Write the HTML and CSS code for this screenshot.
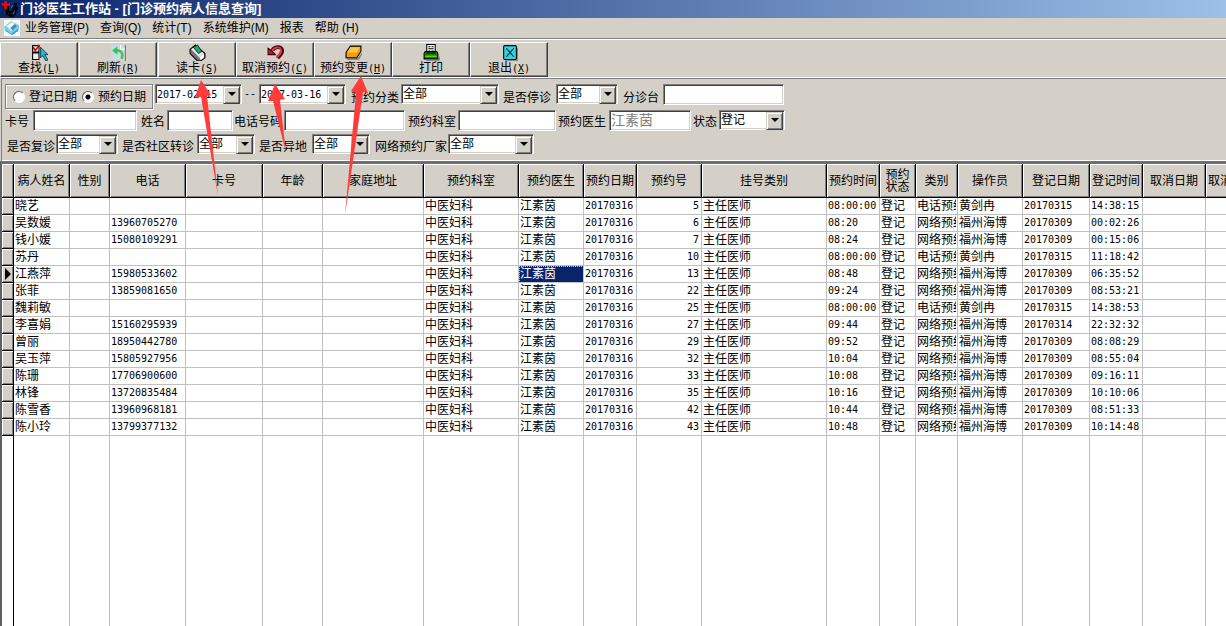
FILE: index.html
```html
<!DOCTYPE html>
<html lang="zh-CN">
<head>
<meta charset="utf-8">
<title>门诊医生工作站</title>
<link rel="stylesheet" href="styles.css">
</head>
<body>
<div class="app">
  <header class="titlebar">
    <svg class="logo" viewBox="0 0 18 18"><path d="M8 6v4c0 3 4 3 5 0l3-5M10 11v3c1 3 5 2 5-1l2-6M14 4h3M7 8v6l4 2" fill="none" stroke="#000" stroke-width="2"/><path d="M11 8l2-3M13 14l2-3" stroke="#4868c0"/><path d="M5.500 1v8M2 4.500h8" stroke="#f00" stroke-width="2.500"/></svg>
    <h1 class="title">门诊医生工作站 - [门诊预约病人信息查询]</h1>
  </header>
  <nav class="menubar">
    <svg class="menu-icon" viewBox="0 0 16 16"><path d="M0 0h16v16H0z" fill="#f4fafc"/><path d="M0 7l7-6 8 4v5l-7 5-7-4z" fill="#7ccbe6"/><path d="M2 6l6-4 5 3-6 6z" fill="#c8eef8"/><path d="M2 10l5 4 7-5v2l-6 4-6-4z" fill="#2b9bd0"/><path d="M6 8l5-4 2 2-4 4z" fill="#3d8fb8"/><path d="M4 6l4-3 2 1-4 4z" fill="#fff"/></svg>
    <button class="menu">业务管理(P)</button>
    <button class="menu">查询(Q)</button>
    <button class="menu">统计(T)</button>
    <button class="menu">系统维护(M)</button>
    <button class="menu">报表</button>
    <button class="menu">帮助 (H)</button>
  </nav>
  <div class="toolbar">
    <button class="tool"><svg class="icon" viewBox="0 0 16 16"><path d="M1.500 1.500h6v6h-6zM1.500 8.500h6v6h-6z" fill="#eee" stroke="#000"/><path d="M2 3l2 3 4-5" fill="none" stroke="#d00000" stroke-width="1.500"/><path d="M9 3v10l2-2 3 5 2-1-3-5h3z" fill="#18b8e8" stroke="#000" stroke-width=".6"/></svg><span>查找<span class="key">(<u>L</u>)</span></span></button>
    <button class="tool"><svg class="icon" viewBox="0 0 16 16"><path d="M1 1h13v14H1z" fill="#c4dce2"/><path d="M14.500 1v15" stroke="#777"/><path d="M11 14c2-6-1-8-5-8" fill="none" stroke="#4fbf5b" stroke-width="2.500"/><path d="M2 6l5-4v8z" fill="#34c45c"/><path d="M10 1v4h4" fill="none" stroke="#fff"/></svg><span>刷新<span class="key">(<u>R</u>)</span></span></button>
    <button class="tool"><svg class="icon" viewBox="0 0 16 16"><path d="M1 5l5-4 9 8v4l-4 3H8L1 9z" fill="#777" stroke="#000"/><path d="M2 5l4-3 8 7-4 4z" fill="#e8e8e8"/><path d="M10 13l4-4v4l-3 2z" fill="#fff"/><path d="M4 3l4-2 4 6-3 2z" fill="#1cab72" stroke="#000" stroke-width=".7"/></svg><span>读卡<span class="key">(<u>S</u>)</span></span></button>
    <button class="tool"><svg class="icon" viewBox="0 0 16 16"><path d="M5 6c2-4 8-4 9-1s-1 5-4 8" fill="none" stroke="#400010" stroke-width="3.500"/><path d="M1 4v6h7L6 8 4 6z" fill="#c81030" stroke="#400010"/><path d="M5 6c2-3 7-4 8-1s-1 5-4 8" fill="none" stroke="#e03850" stroke-width="1.800"/></svg><span>取消预约<span class="key">(<u>C</u>)</span></span></button>
    <button class="tool"><svg class="icon" viewBox="0 0 16 16"><path d="M2 13h10l4-5v2l-3 5H2z" fill="#888"/><path d="M5 2h10v5l-4 6H1V8z" fill="#f0a000" stroke="#000"/><path d="M5 3h9l-3 5H2z" fill="#ffc44c"/></svg><span>预约变更<span class="key">(<u>H</u>)</span></span></button>
    <button class="tool"><svg class="icon" viewBox="0 0 16 16"><path d="M3 15h11l2-4v4l-1 1H3z" fill="#888"/><path d="M3.500 8V.500h8V8z" fill="#fff" stroke="#000"/><path d="M5 2.500h2m1 0h2M5 4.500h5M5 6.500h2m1 0h2" stroke="#000"/><path d="M1 9l1-2h11l1 2v5H1z" fill="#168000" stroke="#000"/><path d="M2 11.500h11" stroke="#78f000"/><path d="M3 8.500h9" stroke="#000"/></svg><span>打印</span></button>
    <button class="tool"><svg class="icon" viewBox="0 0 16 16"><path d="M4 15h10l1-1V3l1 1v12H4z" fill="#888"/><rect x="2.500" y="1.500" width="12" height="13" rx="1" fill="#30d4d8" stroke="#000"/><path d="M5 4l7 8M12 4l-7 8" stroke="#024"/></svg><span>退出<span class="key">(<u>X</u>)</span></span></button>
  </div>
  <form class="filters">
    <div class="row row-top">
      <div class="radios">
        <label class="radio"><input type="radio" name="kind">登记日期</label>
        <label class="radio"><input type="radio" name="kind" checked>预约日期</label>
      </div>
      <span class="combo w-date g2"><select class="mono" aria-label="开始日期"><option>2017-02-15</option></select></span>
      <span class="mono dash g2">--</span>
      <span class="combo w-date g3"><select class="mono" aria-label="结束日期"><option>2017-03-16</option></select></span>
      <label class="g5" for="f1">预约分类</label><span class="combo w-98 g2"><select id="f1"><option>全部</option></select></span>
      <label class="g4" for="f2">是否停诊</label><span class="combo w-62 g5"><select id="f2"><option>全部</option></select></span>
      <label class="g5" for="f3">分诊台</label><input class="text w-121 g4" id="f3" type="text">
    </div>
    <div class="row row-mid">
      <label for="f4">卡号</label><input class="text w-104 g4" id="f4" type="text">
      <label class="g4" for="f5">姓名</label><input class="text w-66 g2" id="f5" type="text">
      <label class="g1" for="f6">电话号码</label><input class="text w-121 g2" id="f6" type="text">
      <label class="g3" for="f7">预约科室</label><input class="text w-98 g2" id="f7" type="text">
      <label class="g2" for="f8">预约医生</label><input class="text doctor w-82 g3" id="f8" type="text" value="江素茵" disabled>
      <label class="g2" for="f9">状态</label><span class="combo w-66 g2"><select id="f9"><option>登记</option></select></span>
    </div>
    <div class="row row-low">
      <label for="f10">是否复诊</label><span class="combo w-62 g1"><select id="f10"><option>全部</option></select></span>
      <label class="g4" for="f11">是否社区转诊</label><span class="combo w-58 g3"><select id="f11"><option>全部</option></select></span>
      <label class="g4" for="f12">是否异地</label><span class="combo w-58 g5"><select id="f12"><option>全部</option></select></span>
      <label class="g5" for="f13">网络预约厂家</label><span class="combo w-86 g1"><select id="f13"><option>全部</option></select></span>
    </div>
  </form>
  <main class="grid">
    <table>
      <colgroup><col class="c-mark"><col class="c56"><col class="c40"><col class="c76"><col class="c77"><col class="c60"><col class="c101"><col class="c95"><col class="c65"><col class="c53"><col class="c65"><col class="c125"><col class="c53"><col class="c36"><col class="c42"><col class="c65"><col class="c67"><col class="c53"><col class="c63"><col class="c53"></colgroup>
      <thead><tr><th></th><th>病人姓名</th><th>性别</th><th>电话</th><th>卡号</th><th>年龄</th><th>家庭地址</th><th>预约科室</th><th>预约医生</th><th>预约日期</th><th>预约号</th><th>挂号类别</th><th>预约时间</th><th>预约<br>状态</th><th>类别</th><th>操作员</th><th>登记日期</th><th>登记时间</th><th>取消日期</th><th>取消时间</th></tr></thead>
      <tbody>
        <tr><th></th><td>晓艺</td><td></td><td class="mono"></td><td></td><td></td><td></td><td>中医妇科</td><td>江素茵</td><td class="mono">20170316</td><td class="mono num">5</td><td>主任医师</td><td class="mono">08:00:00</td><td>登记</td><td><div class="clip">电话预约</div></td><td>黄剑冉</td><td class="mono">20170315</td><td class="mono">14:38:15</td><td></td><td></td></tr>
        <tr><th></th><td>吴数媛</td><td></td><td class="mono">13960705270</td><td></td><td></td><td></td><td>中医妇科</td><td>江素茵</td><td class="mono">20170316</td><td class="mono num">6</td><td>主任医师</td><td class="mono">08:20</td><td>登记</td><td><div class="clip">网络预约</div></td><td>福州海博</td><td class="mono">20170309</td><td class="mono">00:02:26</td><td></td><td></td></tr>
        <tr><th></th><td>钱小媛</td><td></td><td class="mono">15080109291</td><td></td><td></td><td></td><td>中医妇科</td><td>江素茵</td><td class="mono">20170316</td><td class="mono num">7</td><td>主任医师</td><td class="mono">08:24</td><td>登记</td><td><div class="clip">网络预约</div></td><td>福州海博</td><td class="mono">20170309</td><td class="mono">00:15:06</td><td></td><td></td></tr>
        <tr><th></th><td>苏丹</td><td></td><td class="mono"></td><td></td><td></td><td></td><td>中医妇科</td><td>江素茵</td><td class="mono">20170316</td><td class="mono num">10</td><td>主任医师</td><td class="mono">08:00:00</td><td>登记</td><td><div class="clip">电话预约</div></td><td>黄剑冉</td><td class="mono">20170315</td><td class="mono">11:18:42</td><td></td><td></td></tr>
        <tr><th><svg class="marker" viewBox="0 0 7 12"><path d="M1 0l6 6-6 6z"/></svg></th><td>江燕萍</td><td></td><td class="mono">15980533602</td><td></td><td></td><td></td><td>中医妇科</td><td class="selected">江素茵</td><td class="mono">20170316</td><td class="mono num">13</td><td>主任医师</td><td class="mono">08:48</td><td>登记</td><td><div class="clip">网络预约</div></td><td>福州海博</td><td class="mono">20170309</td><td class="mono">06:35:52</td><td></td><td></td></tr>
        <tr><th></th><td>张菲</td><td></td><td class="mono">13859081650</td><td></td><td></td><td></td><td>中医妇科</td><td>江素茵</td><td class="mono">20170316</td><td class="mono num">22</td><td>主任医师</td><td class="mono">09:24</td><td>登记</td><td><div class="clip">网络预约</div></td><td>福州海博</td><td class="mono">20170309</td><td class="mono">08:53:21</td><td></td><td></td></tr>
        <tr><th></th><td>魏莉敏</td><td></td><td class="mono"></td><td></td><td></td><td></td><td>中医妇科</td><td>江素茵</td><td class="mono">20170316</td><td class="mono num">25</td><td>主任医师</td><td class="mono">08:00:00</td><td>登记</td><td><div class="clip">电话预约</div></td><td>黄剑冉</td><td class="mono">20170315</td><td class="mono">14:38:53</td><td></td><td></td></tr>
        <tr><th></th><td>李喜娟</td><td></td><td class="mono">15160295939</td><td></td><td></td><td></td><td>中医妇科</td><td>江素茵</td><td class="mono">20170316</td><td class="mono num">27</td><td>主任医师</td><td class="mono">09:44</td><td>登记</td><td><div class="clip">网络预约</div></td><td>福州海博</td><td class="mono">20170314</td><td class="mono">22:32:32</td><td></td><td></td></tr>
        <tr><th></th><td>曾丽</td><td></td><td class="mono">18950442780</td><td></td><td></td><td></td><td>中医妇科</td><td>江素茵</td><td class="mono">20170316</td><td class="mono num">29</td><td>主任医师</td><td class="mono">09:52</td><td>登记</td><td><div class="clip">网络预约</div></td><td>福州海博</td><td class="mono">20170309</td><td class="mono">08:08:29</td><td></td><td></td></tr>
        <tr><th></th><td>吴玉萍</td><td></td><td class="mono">15805927956</td><td></td><td></td><td></td><td>中医妇科</td><td>江素茵</td><td class="mono">20170316</td><td class="mono num">32</td><td>主任医师</td><td class="mono">10:04</td><td>登记</td><td><div class="clip">网络预约</div></td><td>福州海博</td><td class="mono">20170309</td><td class="mono">08:55:04</td><td></td><td></td></tr>
        <tr><th></th><td>陈珊</td><td></td><td class="mono">17706900600</td><td></td><td></td><td></td><td>中医妇科</td><td>江素茵</td><td class="mono">20170316</td><td class="mono num">33</td><td>主任医师</td><td class="mono">10:08</td><td>登记</td><td><div class="clip">网络预约</div></td><td>福州海博</td><td class="mono">20170309</td><td class="mono">09:16:11</td><td></td><td></td></tr>
        <tr><th></th><td>林锋</td><td></td><td class="mono">13720835484</td><td></td><td></td><td></td><td>中医妇科</td><td>江素茵</td><td class="mono">20170316</td><td class="mono num">35</td><td>主任医师</td><td class="mono">10:16</td><td>登记</td><td><div class="clip">网络预约</div></td><td>福州海博</td><td class="mono">20170309</td><td class="mono">10:10:06</td><td></td><td></td></tr>
        <tr><th></th><td>陈雪香</td><td></td><td class="mono">13960968181</td><td></td><td></td><td></td><td>中医妇科</td><td>江素茵</td><td class="mono">20170316</td><td class="mono num">42</td><td>主任医师</td><td class="mono">10:44</td><td>登记</td><td><div class="clip">网络预约</div></td><td>福州海博</td><td class="mono">20170309</td><td class="mono">08:51:33</td><td></td><td></td></tr>
        <tr><th></th><td>陈小玲</td><td></td><td class="mono">13799377132</td><td></td><td></td><td></td><td>中医妇科</td><td>江素茵</td><td class="mono">20170316</td><td class="mono num">43</td><td>主任医师</td><td class="mono">10:48</td><td>登记</td><td><div class="clip">网络预约</div></td><td>福州海博</td><td class="mono">20170309</td><td class="mono">10:14:48</td><td></td><td></td></tr>
        <tr class="filler"><td></td><td></td><td></td><td></td><td></td><td></td><td></td><td></td><td></td><td></td><td></td><td></td><td></td><td></td><td></td><td></td><td></td><td></td><td></td><td></td></tr>
      </tbody>
    </table>
  </main>
  <svg class="arrows" width="400" height="220" viewBox="0 0 400 220"><path d="M201 80l10 15-4 1 11 100-17-99-6 1zM275 84l10 15-5 1 6 53-13-52-5 0zM361 76l7 17-5-1-18 123 11-122-5-2z"/></svg>
</div>
</body>
</html>
```
FILE: styles.css
```css
* { box-sizing: border-box; }
body {
  margin: 0;
  background: #d4d0c8;
  color: #000;
  font: 12px/14px "Liberation Sans", "Noto Sans CJK SC", sans-serif;
}
button, input, select { font: inherit; color: inherit; }
.app { position: relative; display: flex; flex-direction: column; height: 100vh; overflow: hidden; }
.mono, .key { font-family: "DejaVu Sans Mono", "Noto Sans CJK SC", monospace; font-size: 10px; }

.titlebar { display: flex; flex: none; align-items: center; gap: 2px; height: 18px; background: linear-gradient(90deg, #0a246a, #9cc0e8); }
.logo { width: 18px; height: 18px; }
.title { margin: 0; color: #fff; font-size: 13px; line-height: 18px; font-weight: bold; white-space: nowrap; }

.menubar { display: flex; flex: none; align-items: center; gap: 11px; height: 21px; padding: 0 4px 1px; border-bottom: 1px solid #808080; }
.menu-icon { width: 16px; height: 16px; margin-right: -6px; }
.menu { padding: 0; border: 0; background: none; line-height: 18px; white-space: nowrap; }

.toolbar { display: flex; flex: none; height: 39px; padding-top: 2px; border-top: 1px solid #fff; border-bottom: 1px solid #fff; }
.tool {
  display: flex;
  flex-direction: column;
  align-items: center;
  width: 78px;
  height: 35px;
  margin-right: 1px;
  padding: 1px 0 0;
  border: 1px solid;
  border-color: #fff #404040 #404040 #fff;
  background: #d4d0c8;
  box-shadow: inset -1px -1px #808080;
  white-space: nowrap;
}
.tool:nth-child(n+3) { margin-right: 0; }
.icon { flex: none; width: 17px; height: 17px; }

.filters { flex: none; height: 83px; margin: 0 0 0 1px; padding: 5px 0 0 3px; border: 1px solid #808080; border-width: 1px 0 0 1px; box-shadow: inset 0 -1px #fff; }
.row { display: flex; align-items: flex-start; white-space: nowrap; }
.row label { flex: none; }
.row-top { height: 26px; line-height: 28px; }
.row-mid { height: 24px; line-height: 25px; }
.row-low { height: 24px; padding-left: 2px; line-height: 26px; }
.radios { display: flex; align-items: center; gap: 5px; width: 148px; height: 25px; padding-left: 7px; border: 1px solid #808080; box-shadow: inset 1px 1px #fff, 1px 1px #fff; }
.radio { display: flex; align-items: center; gap: 4px; }
.radio input {
  appearance: none;
  width: 12px;
  height: 12px;
  margin: 0;
  border: 1px solid;
  border-color: #606060 #fff #fff #606060;
  border-radius: 50%;
  background: #fff;
}
.radio input:checked { background: radial-gradient(circle, #000 2px, #fff 3px); }
.dash { width: 12px; line-height: 20px; }
.g1 { margin-left: 1px; }
.g2 { margin-left: 2px; }
.g3 { margin-left: 3px; }
.g4 { margin-left: 4px; }
.g5 { margin-left: 5px; }
.text, .combo select {
  border: 1px solid;
  border-color: #808080 #fff #fff #808080;
  border-radius: 0;
  background: #fff;
  box-shadow: inset 1px 1px #404040, inset -1px -1px #d4d0c8;
}
.text { flex: none; height: 21px; padding: 0 3px; }
.text:disabled { color: #808080; }
.doctor { padding: 0 1px; font-size: 14px; }
.combo { position: relative; display: block; flex: none; height: 20px; }
.combo select { display: block; appearance: none; width: 100%; height: 20px; padding: 0 0 0 1px; line-height: 17px; }
.combo::before {
  content: "";
  position: absolute;
  top: 2px;
  right: 2px;
  width: 15px;
  height: 16px;
  border: 1px solid;
  border-color: #d4d0c8 #404040 #404040 #d4d0c8;
  background: #d4d0c8;
  box-shadow: inset 1px 1px #fff, inset -1px -1px #808080;
  pointer-events: none;
}
.combo::after {
  content: "";
  position: absolute;
  top: 8px;
  right: 6px;
  border: 4px solid transparent;
  border-top-color: #000;
  border-bottom: 0;
  pointer-events: none;
}
.w-date { width: 87px; }
.w-58 { width: 58px; }
.w-62 { width: 62px; }
.w-66 { width: 66px; }
.w-82 { width: 82px; }
.w-86 { width: 86px; }
.w-98 { width: 98px; }
.w-104 { width: 104px; }
.w-121 { width: 121px; }

.grid { flex: 1; min-height: 0; overflow: hidden; border: 2px solid #606060; border-width: 3px 0 0 2px; border-top-color: #707070; background: #fff; }
table { width: 100%; height: 100%; table-layout: fixed; border-collapse: separate; border-spacing: 0; }
th, td { overflow: hidden; white-space: nowrap; }
th { padding: 0; border: solid #000; border-width: 0 1px 1px 0; background: #d4d0c8; box-shadow: inset 1px 1px #fff, inset -1px -1px #808080; font-weight: normal; }
thead th { height: 34px; line-height: 12px; }
tbody tr { height: 17px; }
td { height: 17px; padding: 0 1px; border: solid #c0c0c0; border-width: 0 1px 1px 0; line-height: 16px; }
tbody th { height: 17px; line-height: 0; }
.num { padding-right: 2px; text-align: right; }
.clip { overflow: hidden; }
.selected { outline: 1px dotted #f0c868; outline-offset: -1px; background: #0a246a; color: #fff; }
.marker { width: 7px; height: 12px; }
.filler, .filler td { height: auto; }
.filler td { border-bottom: 0; }
.filler td:first-child { border-right-color: #000; }
.c-mark { width: 12px; }
.c36 { width: 36px; }
.c40 { width: 40px; }
.c42 { width: 42px; }
.c53 { width: 53px; }
.c56 { width: 56px; }
.c60 { width: 60px; }
.c63 { width: 63px; }
.c65 { width: 65px; }
.c67 { width: 67px; }
.c76 { width: 76px; }
.c77 { width: 77px; }
.c95 { width: 95px; }
.c101 { width: 101px; }
.c125 { width: 125px; }

.arrows { position: absolute; top: 0; left: 0; fill: #ff3c3c; pointer-events: none; }
```
